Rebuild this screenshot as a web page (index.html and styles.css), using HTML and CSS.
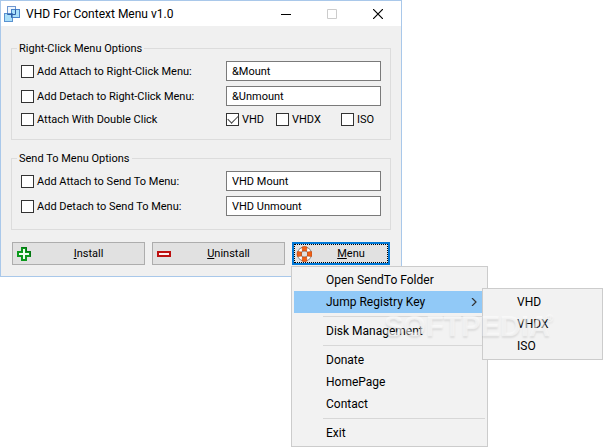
FILE: index.html
```html
<!DOCTYPE html>
<html lang="en">
<head>
<meta charset="utf-8">
<title>VHD For Context Menu v1.0</title>
<link rel="stylesheet" href="styles.css">
</head>
<body>
<main class="window">
  <header class="titlebar">
    <svg class="app-icon" viewBox="0 0 16 16" aria-hidden="true">
      <rect x="3.5" y="0.5" width="8" height="8" fill="#eef6fd" stroke="#6f97d0"/>
      <rect x="7.500" y="3.500" width="8" height="8" fill="#a9dff9" stroke="#4a82c8"/>
      <rect x="0.500" y="7.500" width="8" height="8" fill="#a9dff9" stroke="#5a92d0"/>
      <path d="M3.500 7.500V8.500H11.500V3.500M7.500 7V11.500H8.500" fill="none" stroke="#2d5fa8"/>
    </svg>
    <h1 class="title">VHD For Context Menu v1.0</h1>
    <button class="caption" type="button" aria-label="Minimize"><svg viewBox="0 0 10 10"><path d="M0 5.500H10" stroke="#000"/></svg></button>
    <button class="caption" type="button" aria-label="Maximize" disabled><svg viewBox="0 0 10 10"><path d="M.5 .5H9.500V9.500H.5Z" fill="none" stroke="#ccc"/></svg></button>
    <button class="caption" type="button" aria-label="Close"><svg viewBox="0 0 10 10"><path d="M0 0L10 10M10 0L0 10" stroke="#000" stroke-width="1.200"/></svg></button>
  </header>

  <form class="body">
    <fieldset class="group">
      <legend>Right-Click Menu Options</legend>
      <div class="row">
        <label class="check"><input type="checkbox">Add Attach to Right-Click Menu:</label>
        <input class="field" type="text" value="&amp;Mount" aria-label="Attach caption">
      </div>
      <div class="row">
        <label class="check"><input type="checkbox">Add Detach to Right-Click Menu:</label>
        <input class="field" type="text" value="&amp;Unmount" aria-label="Detach caption">
      </div>
      <div class="row row-types">
        <label class="check"><input type="checkbox">Attach With Double Click</label>
        <div class="types">
          <label class="check"><input type="checkbox" checked>VHD</label>
          <label class="check"><input type="checkbox">VHDX</label>
          <label class="check"><input type="checkbox">ISO</label>
        </div>
      </div>
    </fieldset>

    <fieldset class="group group-send">
      <legend>Send To Menu Options</legend>
      <div class="row">
        <label class="check"><input type="checkbox">Add Attach to Send To Menu:</label>
        <input class="field" type="text" value="VHD Mount" aria-label="Send To attach caption">
      </div>
      <div class="row">
        <label class="check"><input type="checkbox">Add Detach to Send To Menu:</label>
        <input class="field" type="text" value="VHD Unmount" aria-label="Send To detach caption">
      </div>
    </fieldset>

    <div class="actions">
      <button class="button" type="button">
        <svg class="button-icon" viewBox="0 0 16 16" aria-hidden="true"><path d="M6 2H10V6H14V10H10V14H6V10H2V6H6Z" fill="#efffef" stroke="#0b9a1c" stroke-width="2"/><path d="M5.500 1.500H10.500V5.500H14.500V10.500" fill="none" stroke="#057512"/></svg>
        <span><u>I</u>nstall</span>
      </button>
      <button class="button" type="button">
        <svg class="button-icon" viewBox="0 0 16 16" aria-hidden="true"><path d="M2 6H14V10H2Z" fill="#fff0f0" stroke="#bd1010" stroke-width="2"/></svg>
        <span><u>U</u>ninstall</span>
      </button>
      <div class="menu-anchor">
        <button class="button button-active" type="button" aria-haspopup="menu" aria-expanded="true">
          <svg class="button-icon" viewBox="0 0 16 16" aria-hidden="true">
            <circle cx="8.500" cy="8" r="5.200" fill="none" stroke="#8c8c8c" stroke-width="4.800"/>
            <circle cx="8.500" cy="8" r="5.200" fill="none" stroke="#fff" stroke-width="2.800"/>
            <path d="M6 1Q8.500 0 11 1L10.500 5H6.500ZM15.500 5.500Q16.500 8 15.500 10.500L11.500 10V6ZM6 15Q8.500 16 11 15L10.500 11H6.500ZM1.500 5.500Q.5 8 1.500 10.500L5.500 10V6Z" fill="#f26014" stroke="#c2440a" stroke-width=".6"/>
          </svg>
          <span><u>M</u>enu</span>
        </button>
        <ul class="menu menu-main" role="menu">
          <li class="item" role="menuitem">Open SendTo Folder</li>
          <li class="item item-open" role="menuitem">Jump Registry Key
            <svg class="arrow" viewBox="0 0 6 8" aria-hidden="true"><path d="M1 0L5 4L1 8" fill="none" stroke="#333" stroke-width="1.200"/></svg>
            <ul class="menu menu-sub" role="menu">
              <li class="item" role="menuitem">VHD</li>
              <li class="item" role="menuitem">VHDX</li>
              <li class="item" role="menuitem">ISO</li>
            </ul>
          </li>
          <li class="separator" role="separator"></li>
          <li class="item" role="menuitem">Disk Management</li>
          <li class="separator" role="separator"></li>
          <li class="item" role="menuitem">Donate</li>
          <li class="item" role="menuitem">HomePage</li>
          <li class="item" role="menuitem">Contact</li>
          <li class="separator" role="separator"></li>
          <li class="item" role="menuitem">Exit</li>
        </ul>
        <div class="watermark">SOFTPEDIA<sup>®</sup></div>
      </div>
    </div>
  </form>
</main>
</body>
</html>
```
FILE: styles.css
```css
* { box-sizing: border-box; }

body {
  min-height: 100vh;
  margin: 0;
  background: #fff;
  color: #000;
  font: 11px/15px Roboto, Tahoma, sans-serif;
}

.window {
  max-width: 402px;
  border: 1px solid #a9c8ea;
  background: #f0f0f0;
}

.titlebar {
  display: flex;
  align-items: center;
  height: 25px;
  padding-left: 3px;
  background: #fff;
}

.app-icon { width: 16px; height: 16px; }

.title {
  flex: 1;
  margin: 0 0 0 6px;
  font: 12px/16px Roboto, "Segoe UI", sans-serif;
  white-space: nowrap;
}

.caption {
  display: grid;
  place-items: center;
  width: 46px;
  height: 25px;
  padding: 0;
  border: 0;
  background: none;
}

.caption svg { width: 10px; height: 10px; }

.body {
  display: grid;
  gap: 11px;
  padding: 15px 10px 10px;
}

.group {
  display: grid;
  gap: 5px;
  min-width: 0;
  margin: 0;
  padding: 6px 9px 11px;
  border: 1px solid #dcdcdc;
}

.group-send { padding-bottom: 13px; }

.group legend {
  height: 14px;
  margin-left: -4px;
  padding: 0 2px;
}

.row {
  display: grid;
  grid-template-columns: 1fr 155px;
  align-items: center;
  height: 20px;
}

.row-types { height: 17px; }

.check {
  display: flex;
  align-items: center;
  gap: 3px;
  white-space: nowrap;
}

.check input {
  appearance: none;
  flex: none;
  width: 13px;
  height: 13px;
  margin: 0;
  border: 1px solid #333;
  background: #fff;
}

.check input:checked::before {
  content: "";
  display: block;
  width: 9px;
  height: 5px;
  margin: 2px 0 0 1px;
  border: solid #444;
  border-width: 0 0 1px 1px;
  transform: translateY(-1px) rotate(-45deg);
}

.types {
  display: grid;
  grid-template-columns: 50px 65px 40px;
}

.field {
  width: 100%;
  height: 20px;
  padding: 0 5px;
  border: 1px solid #7a7a7a;
  background: #fff;
  color: #000;
  font: inherit;
}

.actions {
  display: grid;
  grid-template-columns: 133fr 133fr 98fr;
  gap: 7px;
  margin: 1px;
}

.button {
  display: flex;
  align-items: center;
  width: 100%;
  height: 23px;
  padding: 0 3px;
  border: 1px solid #adadad;
  background: #e1e1e1;
  color: #000;
  font: inherit;
}

.button span { flex: 1; padding-left: 4px; }

.button-icon { width: 16px; height: 16px; }

.button-active {
  padding: 0 2px;
  border: 2px solid #0078d7;
  outline: 1px dotted #000;
  outline-offset: -3px;
}

.menu-anchor { position: relative; }

.menu {
  position: absolute;
  margin: 0;
  padding: 2px;
  border: 1px solid #ccc;
  background: #f2f2f2;
  list-style: none;
  font: 12px/22px Roboto, "Segoe UI", sans-serif;
}

.menu-main {
  top: 24px;
  left: -1px;
  width: 197px;
}

.menu-sub {
  top: -3px;
  left: 188px;
  width: 121px;
}

.item {
  position: relative;
  height: 22px;
  padding-left: 32px;
  white-space: nowrap;
}

.item-open { background: #91c9f7; }

.arrow {
  position: absolute;
  top: 7px;
  right: 8px;
  width: 6px;
  height: 8px;
}

.separator {
  height: 7px;
  margin-left: 29px;
  padding-top: 3px;
}

.separator::before {
  content: "";
  display: block;
  height: 1px;
  background: #d7d7d7;
}

.watermark {
  position: absolute;
  top: 68px;
  left: 92px;
  color: rgba(255, 255, 255, 0.3);
  font: bold 29px/32px "Liberation Sans", Arial, sans-serif;
  text-shadow: 0 0 1px rgba(255, 255, 255, 0.4), 0 2px 2px rgba(0, 0, 0, 0.09);
  white-space: nowrap;
  pointer-events: none;
}

.watermark sup {
  margin-left: -4px;
  font-size: 10px;
  line-height: 10px;
  vertical-align: 14px;
}
```
